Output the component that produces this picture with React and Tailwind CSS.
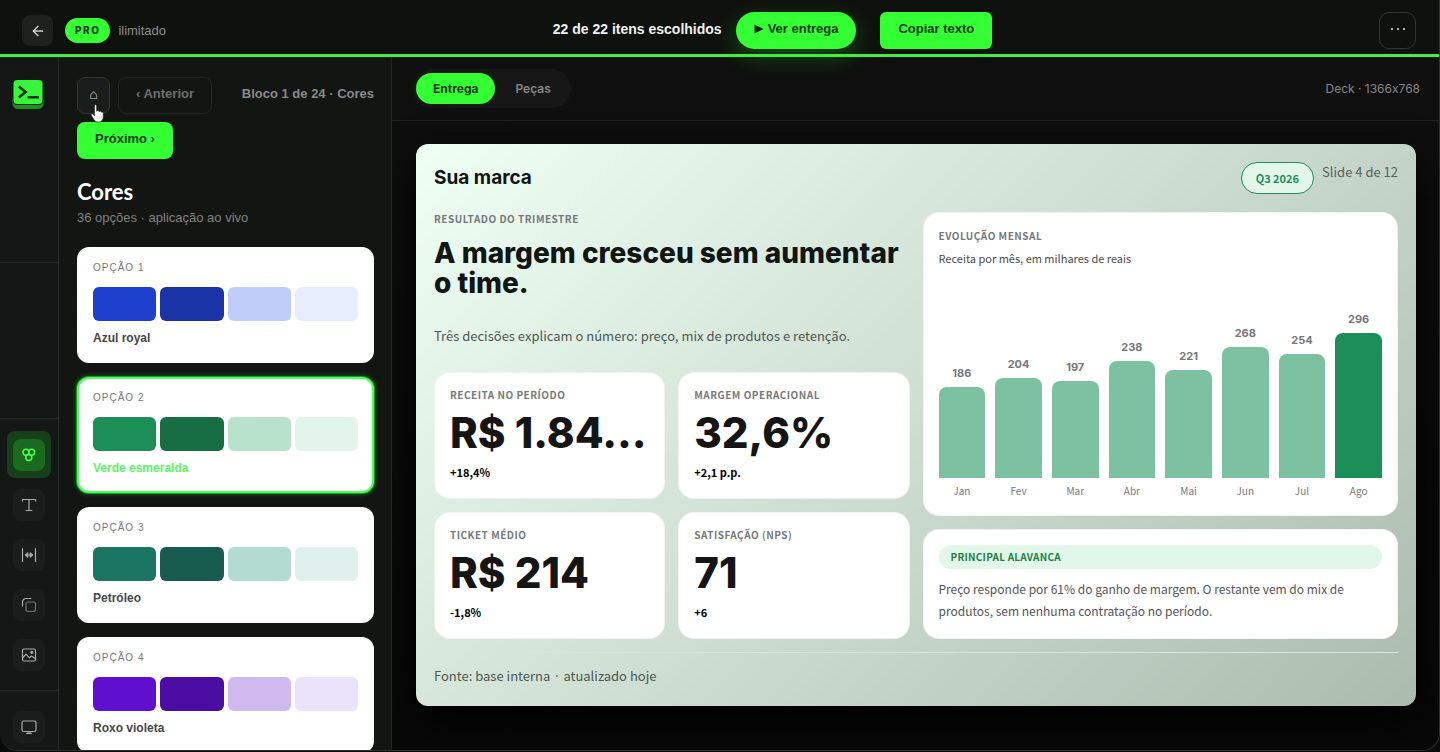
// src/App.jsx
// Brand kit editor: icon rail, palette picker and live slide preview.

import clsx from "clsx";
import { ArrowLeft } from "lucide-react";

const PALETTES = [
  { name: "Azul royal", colors: ["#1f3fcf", "#1a33a6", "#bfcdf8", "#e6edfd"] },
  { name: "Verde esmeralda", colors: ["#1b8f57", "#176e44", "#b9e2cd", "#e3f4eb"] },
  { name: "Petróleo", colors: ["#1a7563", "#165b4e", "#b3dbd2", "#e0f1ed"] },
  { name: "Roxo violeta", colors: ["#5f10cf", "#4b0ca3", "#cfb9ee", "#ebe3f9"] },
];

const KPIS = [
  { label: "Receita no período", value: "R$ 1.84...", delta: "+18,4%" },
  { label: "Margem operacional", value: "32,6%", delta: "+2,1 p.p." },
  { label: "Ticket médio", value: "R$ 214", delta: "-1,8%" },
  { label: "Satisfação (NPS)", value: "71", delta: "+6" },
];

const MONTHS = [
  { month: "Jan", value: 186 },
  { month: "Fev", value: 204 },
  { month: "Mar", value: 197 },
  { month: "Abr", value: 238 },
  { month: "Mai", value: 221 },
  { month: "Jun", value: 268 },
  { month: "Jul", value: 254 },
  { month: "Ago", value: 296 },
];

// Tallest bar in the chart, in pixels.
const BAR_MAX = 145;
const PEAK = Math.max(...MONTHS.map((m) => m.value));

function Logo() {
  return (
    <svg viewBox="0 0 32 30" className="h-[30px] w-8" aria-hidden="true">
      <path d="M0.5 19h31v4.5a5.5 5.5 0 0 1-5.5 5.5H6a5.5 5.5 0 0 1-5.5-5.5z" fill="#1d8f24" />
      <rect x="1" y="0" width="30" height="25" rx="4" fill="#0c2a0d" />
      <rect x="1.5" y="0" width="29" height="24" rx="4" fill="#37f53a" />
      <path d="M7 6.5l6.5 5.5L7 17.5" fill="none" stroke="#0b2f0d" strokeWidth="2.6" />
      <path d="M15.5 17.3H27" stroke="#0b2f0d" strokeWidth="2.4" />
    </svg>
  );
}

const ICONS = {
  colors: (
    <>
      <circle cx="5" cy="5.2" r="3" />
      <circle cx="10.6" cy="5.2" r="3" />
      <circle cx="7.8" cy="10.4" r="3" />
    </>
  ),
  type: <path d="M1.5 4V2.5h13V4M8 2.5v11M5.2 13.5h5.6" />,
  spacing: (
    <>
      <path d="M1.5 1.5v13M14.5 1.5v13M4.5 8h7" />
      <path d="M6.7 5.8L4.5 8l2.2 2.2zM9.3 5.8L11.5 8l-2.2 2.2z" fill="currentColor" />
    </>
  ),
  shape: (
    <>
      <path d="M1.5 9V5a3.5 3.5 0 0 1 3.5-3.5h5" />
      <rect x="5" y="5" width="9.5" height="9.5" rx="2" opacity="0.6" />
    </>
  ),
  image: (
    <>
      <rect x="1.5" y="2" width="13" height="12" rx="1.5" />
      <path d="M2 10.5l3-3.3 3.5 3.6 2-1.8 3.8 2.5" />
      <circle cx="10.8" cy="5.3" r="1" fill="currentColor" />
    </>
  ),
  screen: (
    <>
      <rect x="1" y="2" width="14" height="10.5" rx="1.5" />
      <path d="M5.5 14.5h5M7 12.5v2M9 12.5v2" />
    </>
  ),
};

function RailButton({ icon, label, active }) {
  return (
    <button
      type="button"
      aria-label={label}
      className={clsx(
        "grid h-[47px] w-11 place-items-center rounded-lg",
        active && "bg-[#17401a]"
      )}
    >
      <span
        className={clsx(
          "grid h-8 w-8 place-items-center rounded-lg",
          active ? "bg-[#1b6a1f] text-[#4dff4d]" : "bg-[#1b1d1c] text-[#a9abaa]"
        )}
      >
        <svg
          viewBox="0 0 16 16"
          className="h-4 w-4"
          fill="none"
          stroke="currentColor"
          strokeWidth={active ? 1.5 : 1.2}
          strokeLinecap="round"
          strokeLinejoin="round"
        >
          {ICONS[icon]}
        </svg>
      </span>
    </button>
  );
}

function Rail() {
  return (
    <nav className="flex w-[59px] shrink-0 flex-col border-r border-[#282a29] bg-[#151716]">
      <div className="flex h-[206px] justify-center border-b border-[#282a29] pt-[23px] pr-0.5">
        <Logo />
      </div>
      <div className="flex-1 border-b border-[#282a29]" />
      <div className="flex flex-col items-center gap-[3px] border-b border-[#282a29] py-3">
        <RailButton icon="colors" label="Cores" active />
        <RailButton icon="type" label="Tipografia" />
        <RailButton icon="spacing" label="Espaçamento" />
        <RailButton icon="shape" label="Formas" />
        <RailButton icon="image" label="Imagens" />
      </div>
      <div className="flex justify-center pt-3">
        <RailButton icon="screen" label="Tela" />
      </div>
    </nav>
  );
}

function HandCursor() {
  return (
    <svg
      viewBox="0 0 14 18"
      className="pointer-events-none absolute top-[27px] left-[13px] z-10 h-[19px] w-[15px]"
      aria-hidden="true"
    >
      <path
        d="M4 1.8c0-1.6 2.3-1.6 2.3 0v5c.3-1 2-.9 2.2.4.4-.8 2-.6 2.1.6.5-.6 1.9-.3 1.9 1v3.2c0 3-1.6 5.2-4.7 5.2-2.6 0-3.8-1.5-4.8-3.3L1.1 10.8c-.7-1.3.9-2.2 1.8-1.1L4 11z"
        fill="#fff"
        stroke="#222"
        strokeWidth="0.8"
      />
      <path d="M6.9 11.5v3M8.7 11.5v3M10.5 11.5v3" stroke="#999" strokeWidth="0.4" />
    </svg>
  );
}

function PaletteCard({ index, palette, active }) {
  return (
    <button
      type="button"
      aria-pressed={active}
      className={clsx(
        "flex w-full flex-col rounded-xl border-2 bg-white px-[14px] pt-3 pb-[15px] text-left",
        active
          ? "border-[#4dff5a] shadow-[0_0_0_1px_#1c9a24,0_0_4px_1px_#14701b]"
          : "border-white"
      )}
    >
      <span className="text-[10px] leading-[14px] tracking-[1px] text-[#77777c] uppercase">
        Opção {index}
      </span>
      <span className="mt-3 grid w-full grid-cols-4 gap-1">
        {palette.colors.map((c) => (
          <span key={c} className="h-[34px] rounded-md" style={{ backgroundColor: c }} />
        ))}
      </span>
      <span
        className={clsx(
          "mt-[9px] text-xs leading-4 font-bold",
          active ? "text-[#5cf564]" : "text-[#46464b]"
        )}
      >
        {palette.name}
      </span>
    </button>
  );
}

function Sidebar() {
  return (
    <aside className="w-[333px] shrink-0 overflow-hidden border-r border-[#232524] bg-[#131513] px-[18px] pt-5 pr-[17px]">
      <div className="flex flex-wrap items-center gap-2">
        <div className="relative">
          <button
            type="button"
            aria-label="Início"
            className="h-[37px] w-[33px] rounded-lg border border-[#343635] bg-[#1b1d1c] pb-1 text-sm text-[#d5d5d5]"
          >
            ⌂
          </button>
          <HandCursor />
        </div>
        <button
          type="button"
          className="h-[37px] rounded-lg border border-[#232524] px-[17px] pb-1 text-[13px] font-bold text-[#6d6f6e]"
        >
          ‹ Anterior
        </button>
        <span className="ml-auto pb-1 text-[13px] font-bold text-[#88898a]">Bloco 1 de 24 · Cores</span>
        <button
          type="button"
          className="h-[37px] rounded-lg bg-[#33ff33] px-[18px] pb-1 text-[13px] font-bold text-[#0b3a0e]"
        >
          Próximo ›
        </button>
      </div>
      <h2 className="mt-5 font-['Lato',sans-serif] text-[22px] leading-[26px] font-bold text-white">Cores</h2>
      <p className="mt-[3px] text-[13px] leading-5 text-[#808281]">36 opções · aplicação ao vivo</p>
      <div className="mt-[19px] flex flex-col gap-[14px]">
        {PALETTES.map((p, i) => (
          <PaletteCard key={p.name} index={i + 1} palette={p} active={i === 1} />
        ))}
      </div>
    </aside>
  );
}

function Eyebrow({ children }) {
  return (
    <p className="text-[10px] leading-[14px] font-bold tracking-wider text-[#77797c] uppercase">
      {children}
    </p>
  );
}

function KpiCard({ kpi }) {
  return (
    <div className="min-w-0 rounded-2xl border border-black/5 bg-white px-[15px] pt-[15px] pb-[17px]">
      <Eyebrow>{kpi.label}</Eyebrow>
      <p className="mt-2 font-['Inter',sans-serif] text-[42px] leading-[46px] font-extrabold whitespace-nowrap text-[#151516]">
        {kpi.value}
      </p>
      <p className="mt-[7px] text-[11px] leading-[18px] font-bold text-black">{kpi.delta}</p>
    </div>
  );
}

function Chart() {
  return (
    <section className="flex flex-1 flex-col rounded-2xl border border-black/5 bg-white px-[15px] py-4">
      <Eyebrow>Evolução mensal</Eyebrow>
      <p className="mt-[6px] text-[11px] leading-[18px] text-[#4b4b4f]">Receita por mês, em milhares de reais</p>
      <div className="flex flex-1 items-end gap-[10px]">
        {MONTHS.map((m) => (
          <div key={m.month} className="flex min-w-0 flex-1 flex-col items-center">
            <span className="font-['Inter',sans-serif] text-[11px] leading-[14px] font-bold text-[#77777c]">
              {m.value}
            </span>
            <div
              className={clsx(
                "mt-[7px] w-full rounded-t-lg",
                m.value === PEAK ? "bg-[#1b8f57]" : "bg-[#7bc1a2]"
              )}
              style={{ height: Math.round((m.value / PEAK) * BAR_MAX) }}
            />
            <span className="mt-[5px] text-[10px] leading-4 text-[#77777c]">{m.month}</span>
          </div>
        ))}
      </div>
    </section>
  );
}

function Slide() {
  return (
    <article className="rounded-xl bg-linear-[135deg,#f0fff4,#abbbae] px-[18px] pt-[18px] pb-5 font-['Noto_Sans_CJK_JP','Noto_Sans',sans-serif] shadow-[0_16px_40px_#000]">
      <header className="flex items-start justify-between">
        <h1 className="font-['Inter',sans-serif] text-[19px] leading-8 font-bold text-[#111513]">Sua marca</h1>
        <div className="flex items-start gap-2">
          <span className="rounded-full border border-[#1b8f57] bg-[#e3f6ea] px-[14px] py-[5px] text-[11px] leading-5 font-bold text-[#1b8f57]">
            Q3 2026
          </span>
          <span className="text-[13px] leading-5 text-[#57625b]">Slide 4 de 12</span>
        </div>
      </header>

      <div className="mt-[18px] grid grid-cols-2 gap-[13px]">
        <div className="flex flex-col">
          <Eyebrow>Resultado do trimestre</Eyebrow>
          <h2 className="mt-3 font-['Inter',sans-serif] text-[28px] leading-[30px] font-extrabold text-[#111513]">
            A margem cresceu sem aumentar o time.
          </h2>
          <p className="mt-7 text-[13px] leading-5 text-[#4d5852]">
            Três decisões explicam o número: preço, mix de produtos e retenção.
          </p>
          <div className="mt-[26px] grid grid-cols-2 gap-[13px]">
            {KPIS.map((k) => (
              <KpiCard key={k.label} kpi={k} />
            ))}
          </div>
        </div>

        <div className="flex flex-col gap-[13px]">
          <Chart />
          <section className="rounded-2xl border border-black/5 bg-white px-[15px] pt-[15px] pb-4">
            <h3 className="rounded-full bg-[#e3f6ea] px-3 text-[10px] leading-6 font-bold tracking-wide text-[#1d8443] uppercase">
              Principal alavanca
            </h3>
            <p className="mt-[9px] text-xs leading-[22px] text-[#55555a]">
              Preço responde por 61% do ganho de margem. O restante vem do mix de produtos, sem nenhuma
              contratação no período.
            </p>
          </section>
        </div>
      </div>

      <footer className="mt-[13px] border-t border-[#d9e5dc] pt-[13px] text-[13px] leading-5 text-[#4d5852]">
        Fonte: base interna · atualizado hoje
      </footer>
    </article>
  );
}

function TopBar() {
  return (
    <header className="relative z-20 flex items-center justify-between border-b-[3px] border-[#42ed45] bg-[#0f110e] pt-3 pr-[23px] pb-[5px] pl-[22px]">
      <div className="flex items-center">
        <button
          type="button"
          aria-label="Voltar"
          className="grid h-[31px] w-[31px] place-items-center rounded-lg bg-[#1f211f] text-[#d0d0d0]"
        >
          <ArrowLeft className="h-4 w-4" />
        </button>
        <span className="ml-3 rounded-full bg-[#33ff33] px-[10px] font-['Inter',sans-serif] text-[10px] leading-[25px] font-extrabold tracking-[1.5px] text-[#0b3a0e]">
          PRO
        </span>
        <span className="ml-2 text-[13px] text-[#8b8d8b]">ilimitado</span>
      </div>

      <div className="flex items-center">
        <span className="pb-1 text-sm font-bold text-[#efefef]">22 de 22 itens escolhidos</span>
        <button
          type="button"
          className="ml-[14px] flex h-[37px] items-center gap-1 rounded-full bg-[#33ff33] px-[18px] pb-[3px] text-[13px] font-bold text-[#0b3a0e] shadow-[0_8px_24px_rgba(51,255,51,0.25)]"
        >
          <svg viewBox="0 0 10 10" className="h-[10px] w-[10px]" fill="#0a1f0b" aria-hidden="true">
            <path d="M0.5 0.5L9.5 5L0.5 9.5z" />
          </svg>
          Ver entrega
        </button>
        <button
          type="button"
          className="ml-6 h-[37px] rounded-md bg-[#33ff33] px-[18px] pb-[3px] text-[13px] font-bold text-[#0b3a0e]"
        >
          Copiar texto
        </button>
      </div>

      <button
        type="button"
        aria-label="Mais opções"
        className="flex h-[37px] w-[37px] items-center justify-center gap-1 rounded-[10px] border border-[#343634] pb-1"
      >
        <span className="h-[2px] w-[2px] rounded-full bg-[#e5e5e5]" />
        <span className="h-[2px] w-[2px] rounded-full bg-[#e5e5e5]" />
        <span className="h-[2px] w-[2px] rounded-full bg-[#e5e5e5]" />
      </button>
    </header>
  );
}

export default function App() {
  return (
    <div className="h-screen bg-[#0a0a0a] pb-px font-['Liberation_Sans',Arial,sans-serif]">
      <div className="flex h-full flex-col overflow-hidden rounded-b-[18px] border-r border-b border-[#303230] bg-[#0e0e0e]">
        <TopBar />
        <div className="flex min-h-0 flex-1">
          <Rail />
          <Sidebar />
          <main className="min-w-0 flex-1 overflow-hidden bg-linear-to-b from-[#0f0f0f] to-[#080808]">
            <div className="flex items-center justify-between border-b border-[#232323] bg-[#0f0f0f] py-3 pr-[19px] pl-[21px] font-['Inter',sans-serif] [font-feature-settings:'calt'_0]">
              <div role="tablist" className="flex rounded-full bg-[#171717] p-1 pl-[3px] text-xs">
                <button
                  type="button"
                  role="tab"
                  aria-selected="true"
                  className="rounded-full bg-[#33ff33] px-[17px] leading-[31px] font-bold text-[#0b3a0e]"
                >
                  Entrega
                </button>
                <button
                  type="button"
                  role="tab"
                  aria-selected="false"
                  className="rounded-full pr-4 pl-5 leading-[31px] font-semibold text-[#868686]"
                >
                  Peças
                </button>
              </div>
              <span className="text-xs text-[#868686]">Deck · 1366x768</span>
            </div>
            <div className="px-6 pt-[23px] pr-[23px]">
              <Slide />
            </div>
          </main>
        </div>
      </div>
    </div>
  );
}
